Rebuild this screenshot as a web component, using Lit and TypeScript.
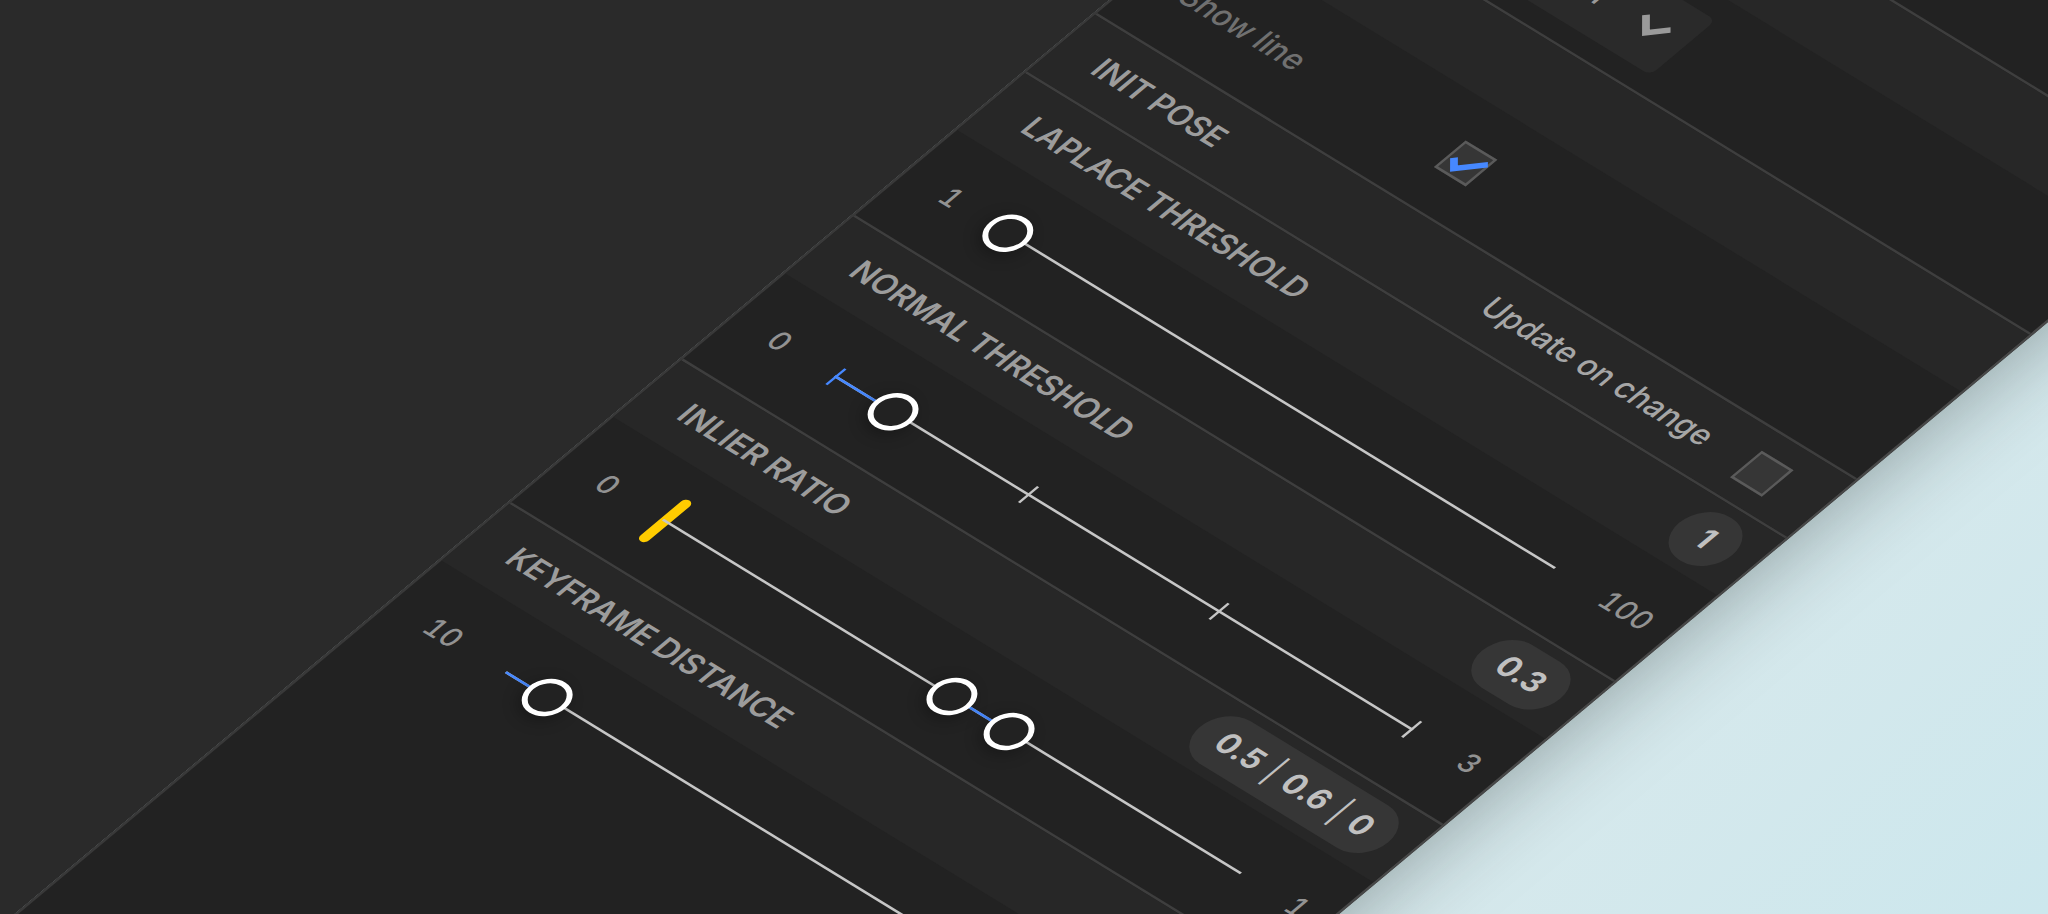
import { LitElement, html, css, nothing } from "lit";
import { customElement, property } from "lit/decorators.js";

interface SliderSpec {
  title: string;
  min: number;
  max: number;
  step: number;
  values: number[];
  marker?: number;
  ticks?: number[];
  fill: [number, number];
}

const SLIDERS: SliderSpec[] = [
  { title: "LAPLACE THRESHOLD", min: 1, max: 100, step: 1, values: [1], fill: [1, 1] },
  { title: "NORMAL THRESHOLD", min: 0, max: 3, step: 0.1, values: [0.3], ticks: [0, 1, 2, 3], fill: [0, 0.3] },
  { title: "INLIER RATIO", min: 0, max: 1, step: 0.1, values: [0.5, 0.6], marker: 0, fill: [0.5, 0.6] },
  { title: "KEYFRAME DISTANCE", min: 10, max: 100, step: 1, values: [17], fill: [10, 17] },
];

@customElement("slider-section")
export class SliderSection extends LitElement {
  @property({ attribute: false }) spec!: SliderSpec;

  static styles = css`
    :host {
      display: block;
      border-top: 1px solid #3e3e3e;
    }
    .head {
      box-sizing: border-box;
      height: 32px;
      padding: 0 9px 0 17px;
      display: flex;
      align-items: center;
      justify-content: space-between;
      background: #272727;
    }
    .title {
      margin: 0;
      font-size: 12px;
      font-weight: 600;
      color: #9c9c9c;
    }
    .pill {
      display: flex;
      align-items: center;
      box-sizing: border-box;
      height: 24px;
      min-width: 25px;
      padding: 0 9px;
      justify-content: center;
      border-radius: 12px;
      background: #363636;
      color: #c0c0c0;
      font-size: 12px;
      font-weight: 700;
    }
    .bar {
      margin: 0 4px;
      font-weight: 400;
    }
    .body {
      box-sizing: border-box;
      height: 48px;
      padding: 0 9px 2px 17px;
      display: flex;
      align-items: center;
      gap: 23px;
      font-size: 11px;
      font-weight: 500;
      font-variant-numeric: tabular-nums;
      color: #929292;
    }
    .track {
      flex: 1;
      display: grid;
      align-items: center;
      height: 24px;
    }
    .track > * {
      grid-area: 1 / 1;
    }
    .line {
      height: 1px;
      background: #c6c6c6;
    }
    .fill {
      height: 1px;
      background: #4688ff;
    }
    .ticks {
      display: flex;
      justify-content: space-between;
    }
    .tick {
      width: 1px;
      height: 9px;
      background: #c6c6c6;
    }
    .tick.on {
      background: #4688ff;
    }
    input {
      appearance: none;
      -webkit-appearance: none;
      justify-self: center;
      width: calc(100% + 17px);
      height: 17px;
      margin: 0 -10px;
      background: none;
      pointer-events: none;
    }
    input::-webkit-slider-thumb {
      -webkit-appearance: none;
      pointer-events: auto;
      box-sizing: border-box;
      width: 17px;
      height: 17px;
      border: 2px solid #fff;
      border-radius: 9px;
      background: #222;
      box-shadow: 0 2px 6px rgba(0, 0, 0, 0.3);
    }
    input.marker {
      justify-self: start;
      width: 100%;
      height: 23px;
      margin: 0 -1px;
    }
    input.marker::-webkit-slider-thumb {
      width: 4px;
      height: 23px;
      border: 0;
      border-radius: 2px;
      background: #ffcc00;
      box-shadow: none;
    }
  `;

  private percent(value: number): number {
    const { min, max } = this.spec;
    return ((value - min) / (max - min)) * 100;
  }

  private range(value: number, name: string, cls: string) {
    const { min, max, step } = this.spec;
    return html`<input
      class=${cls}
      type="range"
      aria-label=${name}
      min=${min}
      max=${max}
      step=${step}
      .value=${String(value)}
    />`;
  }

  render() {
    const { title, min, max, values, marker, ticks, fill } = this.spec;
    const shown = marker === undefined ? values : [...values, marker];
    const from = this.percent(fill[0]);
    const size = this.percent(fill[1]) - from;
    return html`
      <div class="head">
        <h2 class="title">${title}</h2>
        <output class="pill"
          >${shown.map((v, i) => html`${i ? html`<span class="bar">|</span>` : nothing}<span>${v}</span>`)}</output
        >
      </div>
      <div class="body">
        <span>${min}</span>
        <div class="track">
          ${marker === undefined ? nothing : this.range(marker, `${title} marker`, "marker")}
          <div class="line"></div>
          ${ticks
            ? html`<div class="ticks">
                ${ticks.map((t) => html`<span class="tick ${t <= values[0] ? "on" : ""}"></span>`)}
              </div>`
            : nothing}
          <div class="fill" style="margin-left:${from}%;width:${size}%"></div>
          ${values.map((v, i) => this.range(v, `${title} ${i + 1}`, "knob"))}
        </div>
        <span>${max}</span>
      </div>
    `;
  }
}

@customElement("app-root")
export class AppRoot extends LitElement {
  static styles = css`
    :host {
      display: block;
      font-family: Inter, "Liberation Sans", Arial, sans-serif;
      line-height: 16px;
    }
    .scene {
      height: 100vh;
      overflow: hidden;
      background: linear-gradient(135deg, #d8e9ec 75%, #cce7ed 100%);
    }
    .board {
      display: flex;
      width: max-content;
      min-height: 900px;
      transform-origin: 0 0;
      transform: matrix(2.117, 1.296, -2.122, 1.772, 766, -939);
      box-shadow: 0 4px 34px rgba(20, 32, 32, 0.4);
    }
    .canvas {
      width: 400px;
      background: #2a2a2a;
    }
    .panel {
      box-sizing: border-box;
      width: 361px;
      border-left: 1px solid #393939;
      border-right: 1px solid #484848;
      background: #222;
    }
    .section {
      border-top: 1px solid #3e3e3e;
    }
    .head {
      box-sizing: border-box;
      height: 32px;
      padding: 0 20px 0 17px;
      display: flex;
      align-items: center;
      justify-content: space-between;
      background: #272727;
    }
    .title {
      margin: 0;
      font-size: 12px;
      font-weight: 600;
      color: #9c9c9c;
    }
    .body {
      box-sizing: border-box;
      height: 48px;
      padding: 0 9px 0 17px;
      display: flex;
      align-items: center;
    }
    .body.check {
      height: 49px;
    }
    .field {
      display: flex;
      align-items: center;
      font-size: 12px;
      font-weight: 500;
      color: #a6a6a6;
    }
    .name {
      width: 125px;
      color: #707070;
    }
    .trailing {
      gap: 18px;
    }
    .tickbox {
      display: grid;
    }
    .tickbox > * {
      grid-area: 1 / 1;
    }
    .tickbox input {
      appearance: none;
      -webkit-appearance: none;
      box-sizing: border-box;
      width: 15px;
      height: 15px;
      margin: 0;
      border: 1px solid #5a5a5a;
      background: #363636;
    }
    .mark {
      width: 15px;
      height: 15px;
      pointer-events: none;
    }
    .picker {
      display: grid;
      align-items: center;
      justify-items: end;
    }
    .picker > * {
      grid-area: 1 / 1;
    }
    select {
      appearance: none;
      -webkit-appearance: none;
      width: 154px;
      height: 31px;
      padding: 0 36px 0 10px;
      border: 0;
      border-radius: 3px;
      background: #2a2a2a;
      color: #999;
      font: 500 12px/16px Inter, "Liberation Sans", Arial, sans-serif;
      text-align-last: right;
    }
    .chevron {
      width: 14px;
      height: 9px;
      margin-right: 8px;
      pointer-events: none;
    }
  `;

  render() {
    return html`
      <main class="scene">
        <div class="board">
          <div class="canvas"></div>
          <aside class="panel">
            <div class="section">
              <div class="head"></div>
              <div class="body"></div>
            </div>
            <div class="section">
              <div class="head"></div>
              <div class="body">
                <div class="picker">
                  <select aria-label="Mode">
                    <option>Color</option>
                  </select>
                  <svg class="chevron" viewBox="0 0 14 9" fill="none" stroke="#9a9a9a" stroke-width="2.6">
                    <path d="M1.2 1.2 L7 7 L12.8 1.2" />
                  </svg>
                </div>
              </div>
            </div>
            <div class="section">
              <div class="head"></div>
              <div class="body check">
                <label class="field">
                  <span class="name">Show line</span>
                  <span class="tickbox">
                    <input type="checkbox" checked />
                    <svg class="mark" viewBox="0 0 15 15" fill="none" stroke="#4688ff" stroke-width="2.6">
                      <path d="M2.5 8 L6 11.5 L14 3.5" />
                    </svg>
                  </span>
                </label>
              </div>
            </div>
            <div class="section">
              <div class="head">
                <h2 class="title">INIT POSE</h2>
                <label class="field trailing">
                  <span>Update on change</span>
                  <span class="tickbox"><input type="checkbox" /></span>
                </label>
              </div>
            </div>
            ${SLIDERS.map((spec) => html`<slider-section .spec=${spec}></slider-section>`)}
          </aside>
        </div>
      </main>
    `;
  }
}
